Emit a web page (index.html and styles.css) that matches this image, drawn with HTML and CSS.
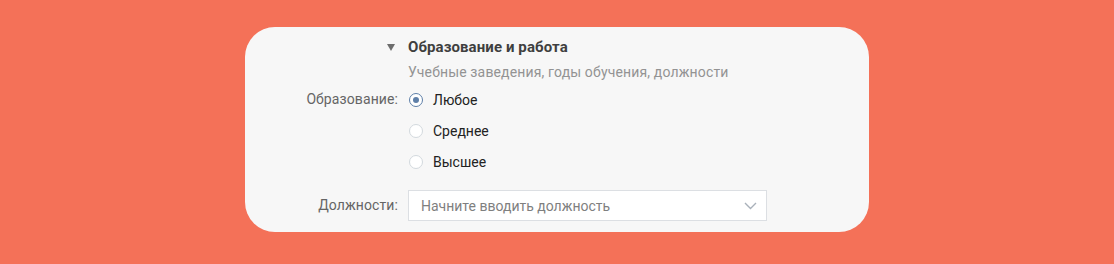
FILE: index.html
```html
<!DOCTYPE html>
<html>
<head>
  <meta charset="UTF-8">
  <title>Образование и работа</title>
  <link rel="stylesheet" href="styles.css">
</head>
<body>
  <div class="card">
    <!-- Section header -->
    <div class="row head">
      <div class="label">
        <svg class="tri" width="8" height="7" viewBox="0 0 8 7"><path d="M0 0H8L4 7Z" fill="#6d6d6d"/></svg>
      </div>
      <div>
        <div class="title">Образование и работа</div>
        <div class="sub">Учебные заведения, годы обучения, должности</div>
      </div>
    </div>

    <!-- Education -->
    <div class="row edu">
      <div class="label">Образование:</div>
      <div class="radios">
        <label class="radio checked"><span class="dot"></span>Любое</label>
        <label class="radio"><span class="dot"></span>Среднее</label>
        <label class="radio"><span class="dot"></span>Высшее</label>
      </div>
    </div>

    <!-- Positions -->
    <div class="row pos">
      <div class="label">Должности:</div>
      <div class="select">
        <span class="placeholder">Начните вводить должность</span>
        <svg width="13" height="8" viewBox="0 0 13 8"><path d="M1 1L6.5 6.5L12 1" fill="none" stroke="#a9b1ba" stroke-width="1.4"/></svg>
      </div>
    </div>
  </div>
</body>
</html>
```

FILE: styles.css
```css
/* --- page --- */
body{margin:0;background:#f47158;font-family:Roboto,"Noto Sans",sans-serif;font-size:14px;color:#222;}
.card{width:624px;margin:27px auto 0;background:#f7f7f7;border-radius:30px;padding:11px 0 11px;box-sizing:border-box;}
/* --- rows --- */
.row{display:grid;grid-template-columns:153px 1fr;column-gap:10px;align-items:start;}
.label{text-align:right;color:#656565;line-height:31px;letter-spacing:.1px;}
.head .label{line-height:18px;}
.tri{display:inline-block;margin-right:3px;vertical-align:1px;}
.title{font-weight:bold;font-size:15px;line-height:18px;color:#3f3f3f;letter-spacing:.1px;}
.sub{color:#939393;line-height:18px;margin-top:7px;letter-spacing:.15px;}
/* --- radios --- */
.edu{margin-top:3px;}
.radios{margin-left:1px;}
.radio{display:flex;align-items:center;height:31px;color:#222;}
.radio .dot{width:12px;height:12px;border:1px solid #d3d9de;border-radius:50%;background:#fff;margin-right:10px;position:relative;}
.radio.checked .dot{border-color:#5e7fa8;}
.radio.checked .dot::after{content:"";position:absolute;left:3px;top:3px;width:6px;height:6px;border-radius:50%;background:#5e7fa8;}
/* --- select --- */
.pos{margin-top:13px;}
.pos .label{line-height:31px;}
.select{width:359px;height:31px;box-sizing:border-box;border:1px solid #dcdfe3;background:#fff;display:flex;align-items:center;justify-content:space-between;padding:0 9px 0 12px;}
.placeholder{color:#7f7f7f;}
```
